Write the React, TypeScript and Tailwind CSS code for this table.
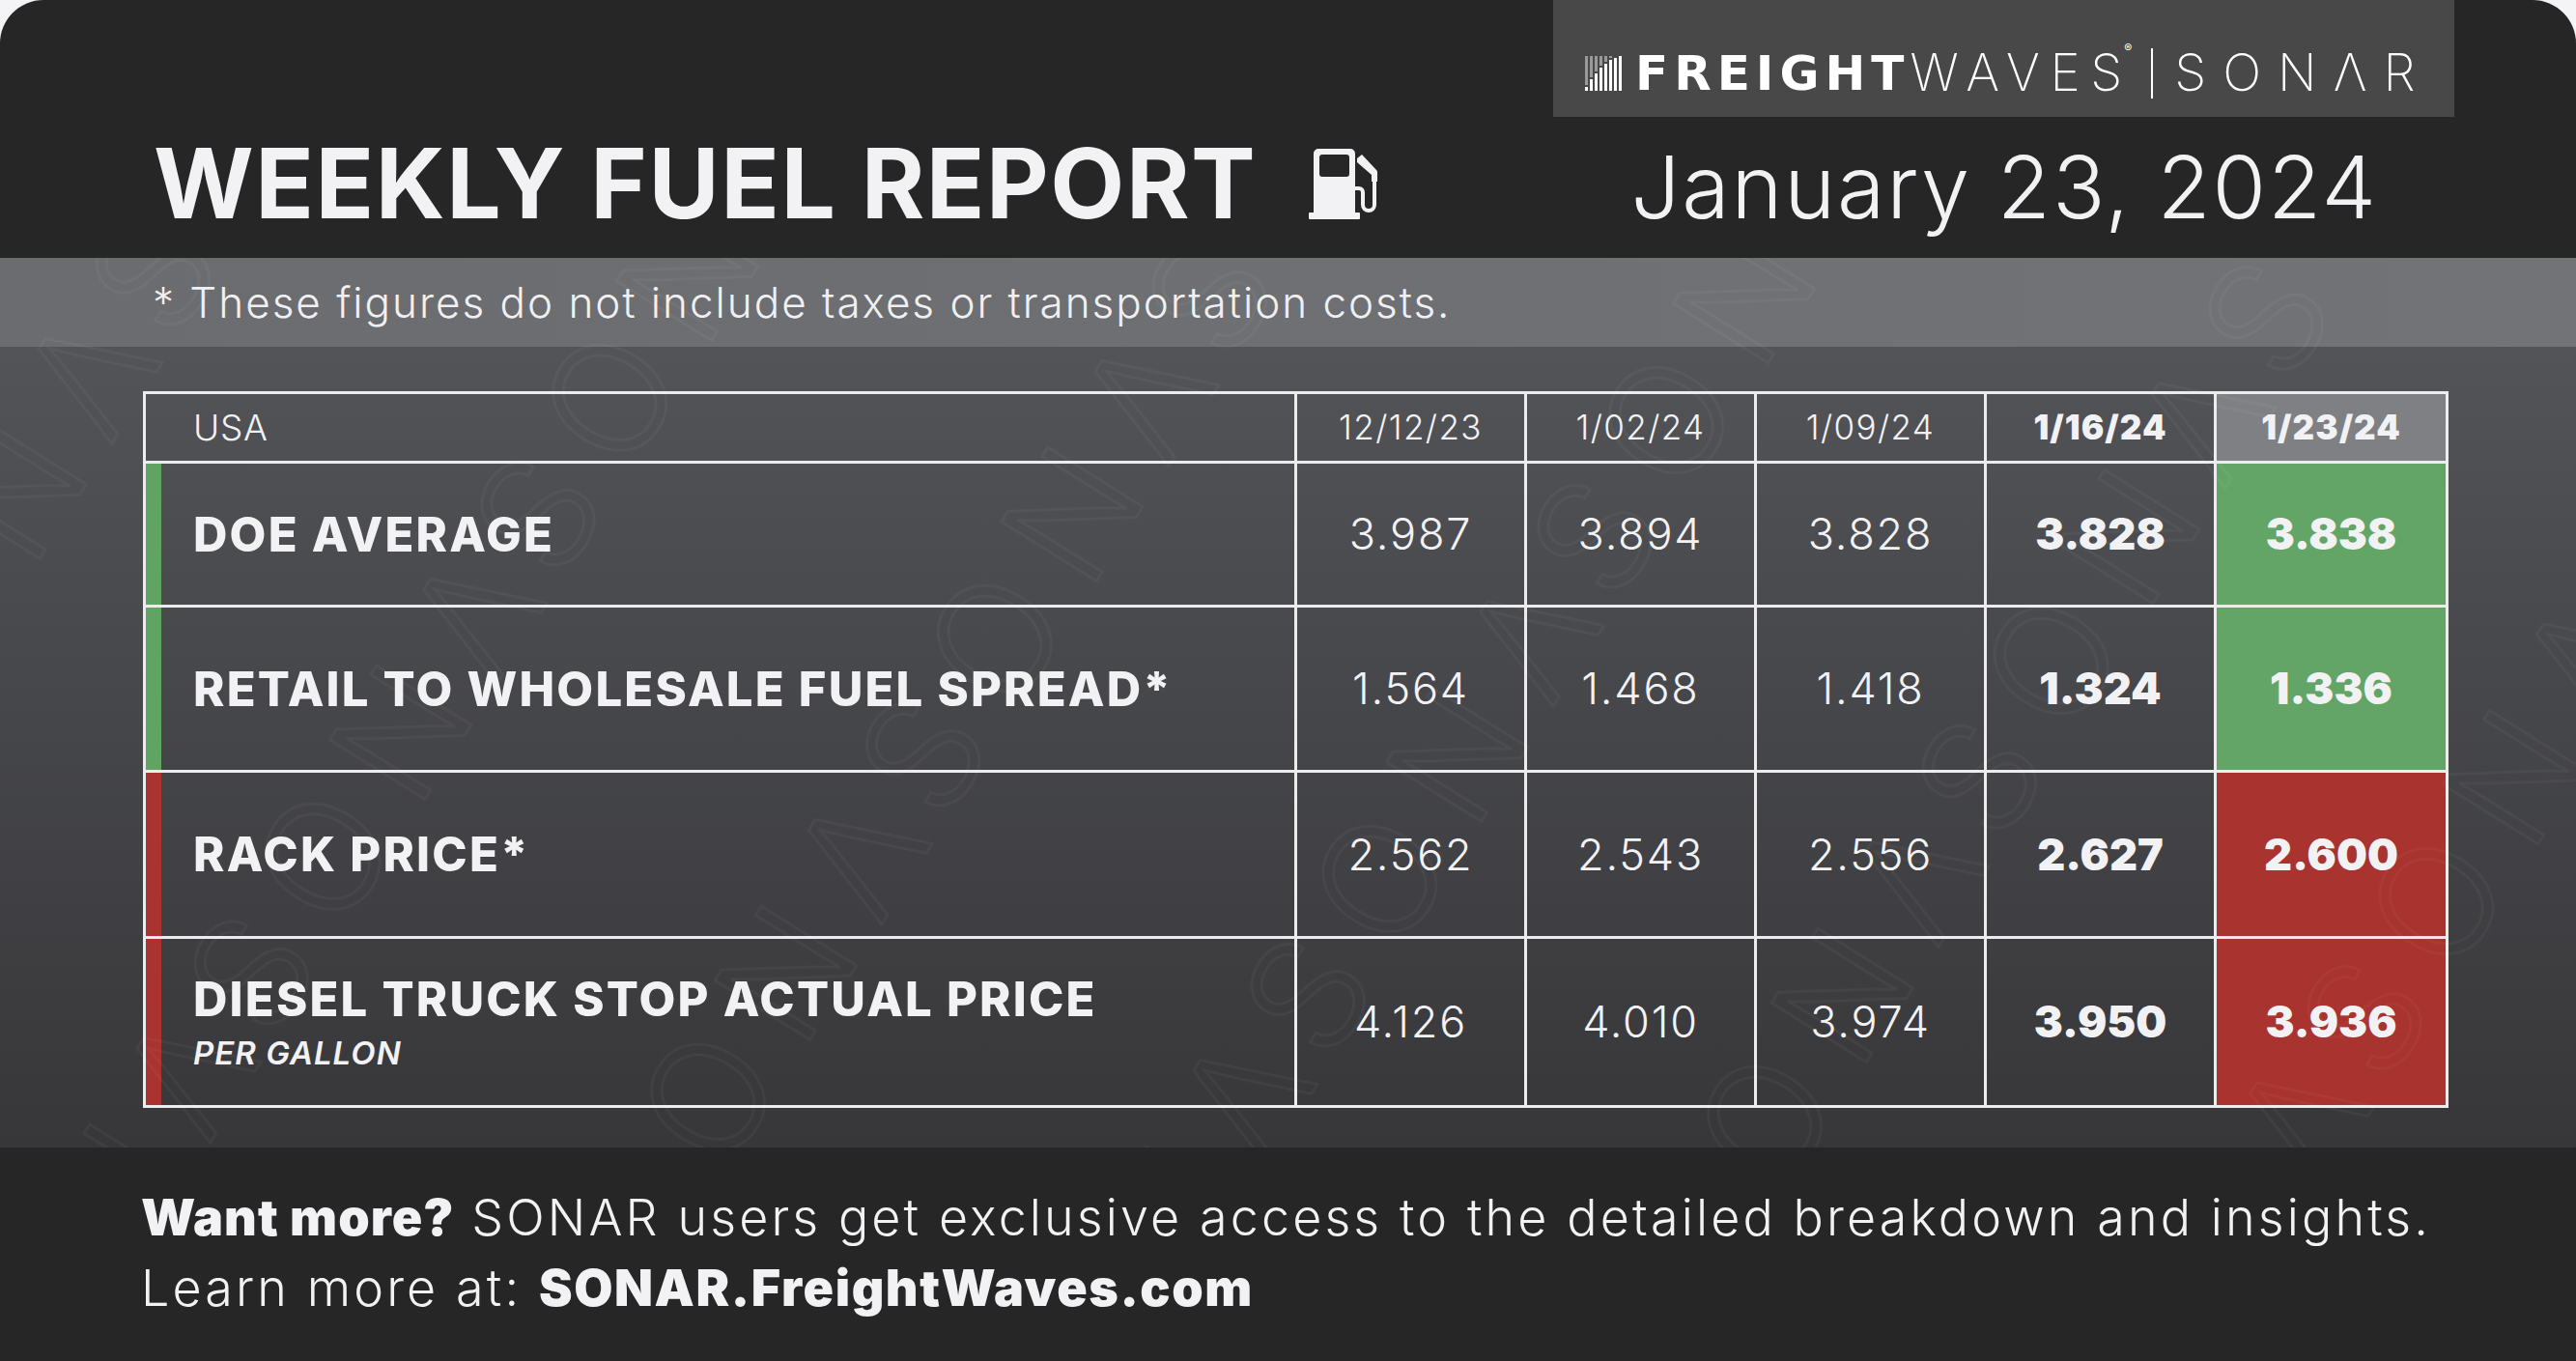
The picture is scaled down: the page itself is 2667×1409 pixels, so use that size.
import React from 'react'

type Row = {
  label: string
  sub?: string
  values: string[]
  latest: string
  up: boolean
  h: string
}

const dates = ['12/12/23', '1/02/24', '1/09/24', '1/16/24']

const rows: Row[] = [
  { label: 'DOE AVERAGE', values: ['3.987', '3.894', '3.828', '3.828'], latest: '3.838', up: true, h: 'h-[149px]' },
  { label: 'RETAIL TO WHOLESALE FUEL SPREAD*', values: ['1.564', '1.468', '1.418', '1.324'], latest: '1.336', up: true, h: 'h-[171px]' },
  { label: 'RACK PRICE*', values: ['2.562', '2.543', '2.556', '2.627'], latest: '2.600', up: false, h: 'h-[172px]' },
  { label: 'DIESEL TRUCK STOP ACTUAL PRICE', sub: 'PER GALLON', values: ['4.126', '4.010', '3.974', '3.950'], latest: '3.936', up: false, h: 'h-[175px]' },
]

function FuelIcon() {
  return (
    <svg width="74" height="74" viewBox="0 0 74 74" fill="#f2f2f4">
      <path
        fillRule="evenodd"
        d="M10 0H43A5 5 0 0 1 48 5V66H5V5A5 5 0 0 1 10 0ZM14 6A3 3 0 0 0 11 9V26A3 3 0 0 0 14 29H39A3 3 0 0 0 42 26V9A3 3 0 0 0 39 6Z"
      />
      <rect x="0" y="66" width="53" height="7" rx="1" />
      <path d="M48 41H52A4 4 0 0 1 56 45V58A6 6 0 0 0 68 58V30" stroke="#f2f2f4" strokeWidth="4" fill="none" />
      <path d="M50 10L55 6L70 22A3 3 0 0 1 71 24V34H65V27L50 14Z" />
    </svg>
  )
}

function BarsMark() {
  const whites = [4, 12, 18, 24, 28, 32, 34, 36]
  return (
    <svg width="38" height="36" viewBox="0 0 38 36">
      {whites.map((w, i) => (
        <g key={i}>
          <rect x={i * 5} y={0} width="3" height={36 - w - 2} fill="#9a9a9a" />
          <rect x={i * 5} y={36 - w} width="3" height={w} fill="#ffffff" />
        </g>
      ))}
    </svg>
  )
}

function Watermark() {
  return (
    <svg className="absolute inset-0 w-full h-full pointer-events-none" width="2667" height="921">
      <defs>
        <pattern id="sonar" width="560" height="470" patternUnits="userSpaceOnUse" patternTransform="rotate(-58)">
          <text
            x="20"
            y="200"
            fontFamily="Inter, sans-serif"
            fontSize="160"
            fontWeight="300"
            letterSpacing="30"
            fill="none"
            stroke="#ffffff"
            strokeWidth="2.5"
          >
            SONΛR
          </text>
        </pattern>
      </defs>
      <rect width="100%" height="100%" fill="url(#sonar)" opacity="0.04" />
    </svg>
  )
}

const cell = 'border-[3px] border-[#ececec]'

export default function App() {
  return (
    <div className="w-[2667px] h-[1409px] bg-[#f4f4f6] font-['Inter',sans-serif] text-[#f2f2f4]">
      <div className="relative h-full rounded-t-[45px] overflow-hidden bg-[#262626] flex flex-col">
        {/* Header */}
        <div className="h-[267px] flex flex-col shrink-0">
          <div className="h-[121px] flex justify-end pr-[126px]">
            <div className="w-[933px] bg-[#484848] flex items-center pt-[30px] pl-[33px]">
              <BarsMark />
              <span className="ml-[14px] text-[50px] leading-none font-black tracking-[0.12em] font-['DejaVu_Sans',sans-serif] text-white">
                FREIGHT
              </span>
              <span className="text-[53px] leading-none font-extralight tracking-[0.2em] text-white">WAVE</span>
              <span className="text-[53px] leading-none font-extralight text-white">S</span>
              <span className="self-start mt-[14px] ml-[2px] text-[12px] leading-none text-white">®</span>
              <div className="ml-[20px] w-[2px] h-[52px] bg-white" />
              <span className="ml-[22px] text-[53px] leading-none font-extralight tracking-[0.32em] text-white">
                SONΛR
              </span>
            </div>
          </div>
          <div className="flex items-baseline justify-between pl-[159px] pr-[205px] pt-[19px]">
            <div className="flex items-start">
              <span className="text-[100px] leading-none font-bold tracking-[0.015em]">WEEKLY FUEL REPORT</span>
              <div className="ml-[54px] mt-[14px]">
                <FuelIcon />
              </div>
            </div>
            <span className="text-[90px] leading-none font-light tracking-[0.02em]">January 23, 2024</span>
          </div>
        </div>

        {/* Note band */}
        <div className="h-[92px] shrink-0 bg-linear-to-r from-[#6b6c70] to-[#727377] flex items-center pl-[158px]">
          <span className="text-[44px] font-light leading-none tracking-[0.045em] text-[#f0f0f2]">
            * These figures do not include taxes or transportation costs.
          </span>
        </div>

        {/* Table area */}
        <div className="flex-1 bg-linear-to-b from-[#535458] to-[#37373a] pt-[46px] pl-[148px]">
          <table className="table-fixed border-collapse w-[2384px]">
            <colgroup>
              <col className="w-[1192px]" />
              <col className="w-[238px]" />
              <col className="w-[238px]" />
              <col className="w-[238px]" />
              <col className="w-[238px]" />
              <col className="w-[240px]" />
            </colgroup>
            <thead>
              <tr className="h-[72px]">
                <th className={`${cell} text-left pl-[49px] text-[37px] font-light tracking-[0.02em]`}>USA</th>
                {dates.map((d, i) => (
                  <th
                    key={d}
                    className={
                      i === 3
                        ? `${cell} text-[35px] font-black tracking-[0.03em]`
                        : `${cell} text-[35px] font-light tracking-[0.04em]`
                    }
                  >
                    {d}
                  </th>
                ))}
                <th className={`${cell} bg-[#7f8083] text-[35px] font-black tracking-[0.03em]`}>1/23/24</th>
              </tr>
            </thead>
            <tbody>
              {rows.map((r) => (
                <tr key={r.label} className={r.h}>
                  <td
                    className={
                      r.up
                        ? `${cell} pl-[49px] shadow-[inset_16px_0_0_#5fa463]`
                        : `${cell} pl-[49px] shadow-[inset_16px_0_0_#a83330]`
                    }
                  >
                    <div className="text-[49px] leading-none font-extrabold tracking-[0.045em]">{r.label}</div>
                    {r.sub && (
                      <div className="mt-[15px] text-[33px] leading-none font-semibold italic tracking-[0.03em]">
                        {r.sub}
                      </div>
                    )}
                  </td>
                  {r.values.map((v, i) => (
                    <td
                      key={i}
                      className={
                        i === 3
                          ? `${cell} text-center text-[45px] font-black`
                          : `${cell} text-center text-[45px] font-light tracking-[0.04em]`
                      }
                    >
                      {v}
                    </td>
                  ))}
                  <td
                    className={
                      r.up
                        ? `${cell} bg-[#62a566] text-center text-[45px] font-black`
                        : `${cell} bg-[#a8332f] text-center text-[45px] font-black`
                    }
                  >
                    {r.latest}
                  </td>
                </tr>
              ))}
            </tbody>
          </table>
        </div>

        {/* Footer */}
        <div className="h-[221px] shrink-0 bg-[#262626] pt-[36px] pl-[146px] text-[52px] leading-[73px] font-light tracking-[0.06em]">
          <div>
            <span className="font-black tracking-[0.02em]">Want more?</span> SONAR users get exclusive access to the detailed breakdown and insights.
          </div>
          <div>
            Learn more at: <span className="font-black tracking-[0.03em]">SONAR.FreightWaves.com</span>
          </div>
        </div>

        <div className="absolute left-0 right-0 top-[267px] h-[921px] pointer-events-none">
          <Watermark />
        </div>
      </div>
    </div>
  )
}
